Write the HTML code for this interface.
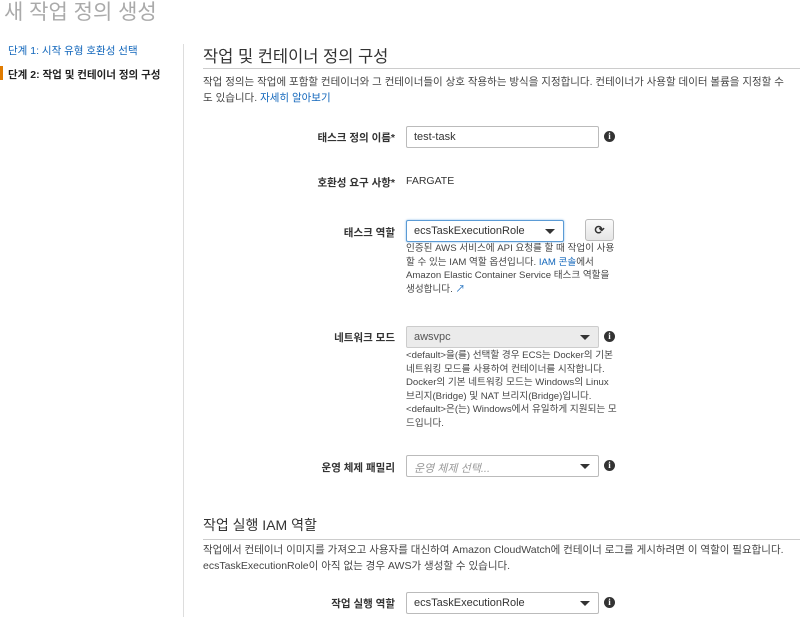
<!DOCTYPE html>
<html><head><meta charset="utf-8"><style>
*{box-sizing:border-box;margin:0;padding:0}
body{width:800px;height:617px;overflow:hidden;background:#fff;font-family:"Liberation Sans","Noto Sans CJK KR",sans-serif;color:#444;position:relative;font-size:11px}
.a{position:absolute;white-space:nowrap}
.title{left:4px;top:-4px;font-size:21px;color:#aaa}
.nav1{left:8px;top:43px;color:#1166bb;font-size:10.5px}
.nav2{left:8px;top:67px;color:#222;font-weight:bold;font-size:10.5px}
.bar{left:0;top:66px;width:3px;height:14px;background:#e07b00}
.sep{left:183px;top:44px;width:1px;height:573px;background:#ddd}
.h{font-size:16.5px;color:#333}
.line{height:1px;background:#ccc;left:203px;width:597px}
.desc{left:203px;font-size:10.5px;color:#444;line-height:16px;white-space:normal;width:590px}
.lbl{font-weight:bold;color:#333;text-align:right;width:200px;left:195px;font-size:10.5px}
.inp{left:406px;height:22px;border:1px solid #bbb;border-radius:2px;padding:4px 7px;font-size:11px;color:#333;background:#fff}
.car{position:absolute;right:8px;top:8px;border-left:5px solid transparent;border-right:5px solid transparent;border-top:5px solid #333}
.info{width:11px;height:11px;border-radius:50%;background:#333;color:#fff;font-size:9px;font-weight:bold;text-align:center;line-height:11px;font-family:"Liberation Serif",serif}
.help{left:406px;font-size:9.6px;line-height:13.5px;color:#444;white-space:normal;width:212px}
</style></head><body>
<div class="a title">새 작업 정의 생성</div>
<div class="a nav1">단계 1: 시작 유형 호환성 선택</div>
<div class="a bar"></div>
<div class="a nav2">단계 2: 작업 및 컨테이너 정의 구성</div>
<div class="a sep"></div>

<div class="a h" style="left:203px;top:43px">작업 및 컨테이너 정의 구성</div>
<div class="a line" style="top:68px"></div>
<div class="a desc" style="top:74px">작업 정의는 작업에 포함할 컨테이너와 그 컨테이너들이 상호 작용하는 방식을 지정합니다. 컨테이너가 사용할 데이터 볼륨을 지정할 수 도 있습니다. <span style="color:#1166bb">자세히 알아보기</span></div>

<div class="a lbl" style="top:130px">태스크 정의 이름*</div>
<div class="a inp" style="top:126px;width:193px">test-task</div>
<div class="a info" style="left:604px;top:131px">i</div>

<div class="a lbl" style="top:175px">호환성 요구 사항*</div>
<div class="a" style="left:406px;top:175px;font-size:10.5px;color:#333">FARGATE</div>

<div class="a lbl" style="top:225px">태스크 역할</div>
<div class="a inp" style="top:220px;width:158px;border-color:#5b9bd5;box-shadow:0 0 2px #8bbbe8">ecsTaskExecutionRole<div class="car"></div></div>
<div class="a" style="left:585px;top:219px;width:29px;height:22px;border:1px solid #bbb;border-radius:3px;background:linear-gradient(#fafafa,#e6e6e6);text-align:center;font-size:12px;line-height:20px;color:#333;font-weight:bold">⟳</div>
<div class="a help" style="top:242px">인증된 AWS 서비스에 API 요청를 할 때 작업이 사용할 수 있는 IAM 역할 옵션입니다. <span style="color:#1166bb">IAM 콘솔</span>에서 Amazon Elastic Container Service 태스크 역할을 생성합니다. <span style="color:#1166bb">↗</span></div>

<div class="a lbl" style="top:330px">네트워크 모드</div>
<div class="a inp" style="top:326px;width:193px;background:#ebebeb;border-color:#ccc;color:#555">awsvpc<div class="car"></div></div>
<div class="a info" style="left:604px;top:331px">i</div>
<div class="a help" style="top:349px">&lt;default&gt;을(를) 선택할 경우 ECS는 Docker의 기본 네트워킹 모드를 사용하여 컨테이너를 시작합니다. Docker의 기본 네트워킹 모드는 Windows의 Linux 브리지(Bridge) 및 NAT 브리지(Bridge)입니다. &lt;default&gt;은(는) Windows에서 유일하게 지원되는 모드입니다.</div>

<div class="a lbl" style="top:460px">운영 체제 패밀리</div>
<div class="a inp" style="top:455px;width:193px;color:#999;font-style:italic">운영 체제 선택...<div class="car"></div></div>
<div class="a info" style="left:604px;top:460px">i</div>

<div class="a h" style="left:203px;top:515px;font-size:14px">작업 실행 IAM 역할</div>
<div class="a line" style="top:539px"></div>
<div class="a desc" style="top:542px">작업에서 컨테이너 이미지를 가져오고 사용자를 대신하여 Amazon CloudWatch에 컨테이너 로그를 게시하려면 이 역할이 필요합니다. ecsTaskExecutionRole이 아직 없는 경우 AWS가 생성할 수 있습니다.</div>

<div class="a lbl" style="top:596px">작업 실행 역할</div>
<div class="a inp" style="top:592px;width:193px">ecsTaskExecutionRole<div class="car"></div></div>
<div class="a info" style="left:604px;top:597px">i</div>
</body></html>
